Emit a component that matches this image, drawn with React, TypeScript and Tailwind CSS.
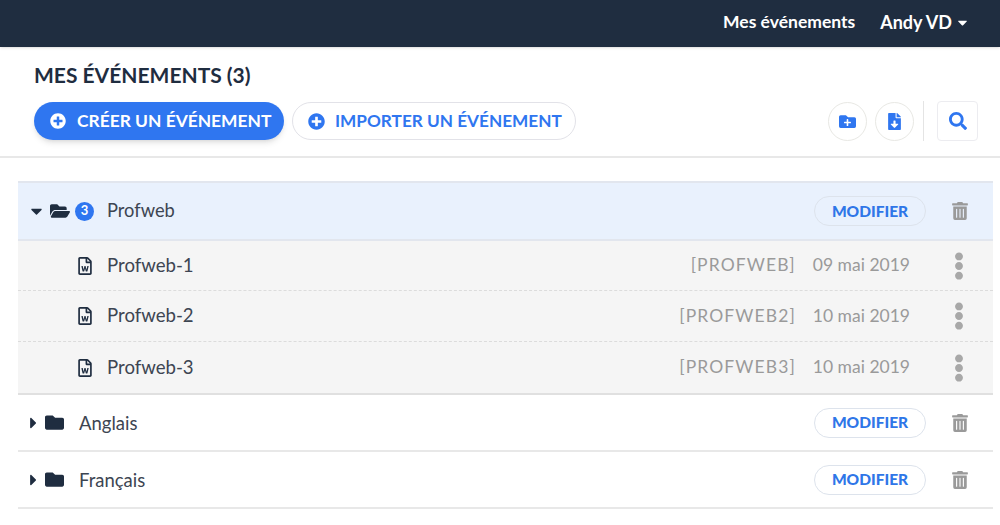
import React from 'react';
import {
  FaCaretDown,
  FaCaretRight,
  FaEllipsisV,
  FaFileDownload,
  FaFolder,
  FaFolderOpen,
  FaFolderPlus,
  FaPlusCircle,
  FaRegFileWord,
  FaSearch,
  FaTrashAlt,
} from 'react-icons/fa';

const children = [
  { name: 'Profweb-1', code: '[PROFWEB]', date: '09 mai 2019' },
  { name: 'Profweb-2', code: '[PROFWEB2]', date: '10 mai 2019' },
  { name: 'Profweb-3', code: '[PROFWEB3]', date: '10 mai 2019' },
];

const RowActions: React.FC = () => (
  <>
    <button className="h-[30px] w-[112px] rounded-full border border-[#dde3ec] pt-[1px] text-[15.5px] font-black text-[#2f76e8]">MODIFIER</button>
    <div className="flex w-[67px] justify-center">
      <FaTrashAlt className="text-[18px] text-[#9a9a9a]" />
    </div>
  </>
);

const Folder: React.FC<{ name: string }> = ({ name }) => (
  <div className="flex h-[57px] items-center border-b-2 border-[#e8e8e8] pl-[10px]">
    <FaCaretRight className="w-[11px] text-[18px] text-[#1f2d40]" />
    <FaFolder className="ml-[6px] text-[19px] text-[#1f2d40]" />
    <span className="ml-[15px] flex-1 pt-[2px] text-[18.5px] text-[#3d4552]">{name}</span>
    <RowActions />
  </div>
);

export default function App() {
  return (
    <div className="h-[525px] w-[1000px] overflow-hidden bg-white font-['Lato',sans-serif]">
      {/* Top bar */}
      <div className="flex h-[47px] items-center justify-end bg-[#1f2d40] pb-[3px] pr-[30px] text-[17.5px] font-bold text-white shadow-sm">
        <span>Mes événements</span>
        <span className="ml-[25px] text-[18px]">Andy VD</span>
        <FaCaretDown className="ml-[3px] text-[15px]" />
      </div>

      {/* Page heading */}
      <div className="h-[111px] border-b-2 border-[#e8e8e8] pl-[34px] pr-[22px] pt-[15px]">
        <h1 className="text-[21px] font-bold leading-[26px] text-[#1f2d40]">MES ÉVÉNEMENTS (3)</h1>
        <div className="mt-[13px] flex items-center">
          <button className="flex h-[38px] w-[250px] items-center rounded-full bg-[#2f76f0] pl-[16px] text-[17.4px] font-bold text-white shadow-md">
            <FaPlusCircle className="mr-[11px] text-[16px]" />
            CRÉER UN ÉVÉNEMENT
          </button>
          <button className="ml-[8px] flex h-[38px] w-[284px] items-center rounded-full border border-[#e2e2e8] pl-[15px] text-[17.2px] font-bold text-[#2f76f0]">
            <FaPlusCircle className="mr-[10px] text-[17px]" />
            IMPORTER UN ÉVÉNEMENT
          </button>
          <div className="flex-1" />
          <button className="flex h-[39px] w-[39px] items-center justify-center rounded-full border border-[#e8e8e4] text-[#2f76f0]">
            <FaFolderPlus className="text-[17px]" />
          </button>
          <button className="ml-[8px] flex h-[39px] w-[39px] items-center justify-center rounded-full border border-[#e8e8e4] text-[#2f76f0]">
            <FaFileDownload className="text-[17px]" />
          </button>
          <div className="ml-[9px] h-[40px] w-px bg-[#e4e4e4]" />
          <button className="ml-[13px] flex h-[40px] w-[41px] items-center justify-center rounded border border-[#ececf0] text-[#2f76f0]">
            <FaSearch className="text-[18px]" />
          </button>
        </div>
      </div>

      {/* Event tree */}
      <div className="ml-[18px] mr-[7px] mt-[23px]">
        <div className="flex h-[60px] items-center border-y-2 border-[#e2e6ee] bg-[#e9f1fd] pl-[12px]">
          <FaCaretDown className="w-[13px] text-[18px] text-[#1f2d40]" />
          <FaFolderOpen className="ml-[7px] text-[20px] text-[#1f2d40]" />
          <span className="ml-[5px] flex h-[19px] w-[19px] items-center justify-center rounded-full bg-[#2f76f0] text-[13px] font-bold text-white">3</span>
          <span className="ml-[13px] flex-1 text-[18.3px] text-[#3d4552]">Profweb</span>
          <RowActions />
        </div>

        <div className="border-b-2 border-[#e0e0e0] bg-[#f5f5f5]">
          {children.map((item, index) => (
            <div key={item.name} className={`flex items-center ${index === 0 ? 'h-[50px]' : 'h-[51px]'} ${index < 2 ? 'border-b border-dashed border-[#dcdcdc]' : ''}`}>
              <FaRegFileWord className="ml-[58px] text-[18px] text-[#1f2d40]" />
              <span className="ml-[13px] flex-1 text-[18.6px] text-[#3d4552]">{item.name}</span>
              <span className="text-[17.5px] tracking-[1.1px] text-[#9a9a9a]">{item.code}</span>
              <span className="ml-[17px] text-[17.5px] text-[#9a9a9a]">{item.date}</span>
              <div className="ml-[15px] flex w-[68px] justify-center">
                <FaEllipsisV className="text-[28px] text-[#a8a8a8]" />
              </div>
            </div>
          ))}
        </div>

        <Folder name="Anglais" />
        <Folder name="Français" />
      </div>
    </div>
  );
}
